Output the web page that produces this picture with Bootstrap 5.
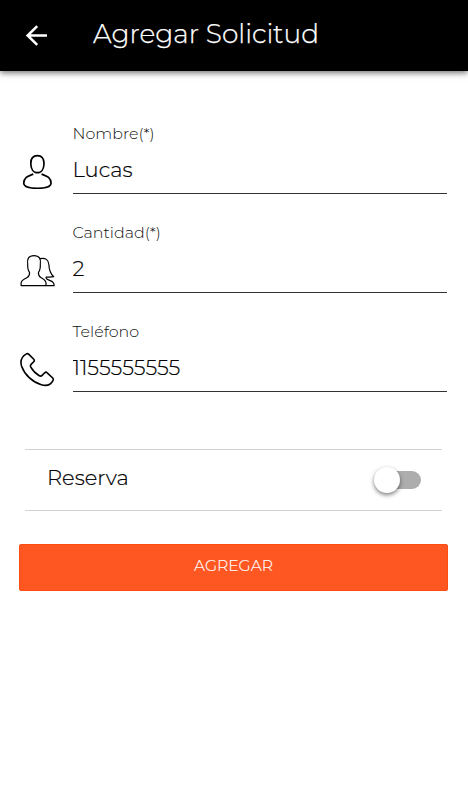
<!DOCTYPE html>
<html lang="es">
<head>
<meta charset="utf-8">
<meta name="viewport" content="width=device-width, initial-scale=1">
<title>Agregar Solicitud</title>
<link href="https://cdn.jsdelivr.net/npm/bootstrap@5.3.0/dist/css/bootstrap.min.css" rel="stylesheet">
<style>
body{font-family:Montserrat,Inter,sans-serif;font-weight:300;color:#000;background:#fff;overflow:hidden}
.app-bar{height:71px;background:#000;box-shadow:0 2px 6px rgba(0,0,0,.55);padding-left:24px}
.app-title{font-size:26.4px;line-height:32px;font-weight:300;color:#fff;margin:0 0 3px 44px;-webkit-text-stroke:.25px #fff}
.form-area{padding:50px 21px 0 20px}
.field-row{height:99px}
.field-icon{width:36px;height:36px;margin:32px 17.500px 0 -1px}
.field-label{font-size:15.900px;line-height:20px;margin-top:3px;color:#111;font-weight:300}
.form-control.field-input{height:38px;font-size:21px;line-height:26px;font-weight:300;margin-top:12px;padding:0 0 11px;border:0;border-bottom:1px solid #333;border-radius:0;color:#000;background:none;box-shadow:none;-webkit-text-stroke:.2px #000}
.reserve-row{margin:31px 5px 0 5px;height:62px;border-top:1px solid #d2d2d2;border-bottom:1px solid #d2d2d2;padding:0 21px 0 22px}
.reserve-label{font-size:21px;line-height:28px;margin-bottom:4px;-webkit-text-stroke:.2px #000}
.form-check-input.toggle{width:35px;height:18px;margin:0;border:0;border-radius:9px;background:#adadad;position:relative;box-shadow:none}
.toggle::before{content:"";position:absolute;left:-12px;top:-4px;width:26px;height:26px;border-radius:50%;background:#fff;box-shadow:0 2px 4px rgba(0,0,0,.5)}
.btn.submit-btn{height:47px;margin:33px -1px 0;width:429px;background:#ff5722;color:#fff;border:1px solid #ff4d12;border-radius:2px;font-size:15.600px;font-weight:300;padding:0 0 4px;-webkit-text-stroke:.15px #fff}
</style>
<script src="https://cdn.jsdelivr.net/npm/bootstrap@5.3.0/dist/js/bootstrap.bundle.min.js" defer></script>
</head>
<body>
<header class="app-bar d-flex align-items-center">
  <svg width="25" height="24" viewBox="0 0 25 24" fill="none" stroke="#fff" stroke-width="2.5" aria-label="Volver"><path d="M23 11.500H4M13.200 2.100 3.600 11.500l9.600 9.400"/></svg>
  <h1 class="app-title">Agregar Solicitud</h1>
</header>
<main class="form-area">
  <div class="field-row d-flex">
    <svg class="field-icon flex-shrink-0" viewBox="0 0 36 36" fill="none" stroke="#000" stroke-width="1.7" stroke-linejoin="round"><path d="M18.400 2.700C13.900 2.700 11.800 5.700 11.800 10.400c0 5.200 2.400 9.300 6.600 9.300s6.600-4.100 6.600-9.300c0-4.700-2.100-7.700-6.600-7.700ZM14.300 21.100C10.300 22.800 5 23.500 4.700 30.300c0 3.500 6 5 13.700 5s13.700-1.500 13.700-5c-.3-6.800-5.600-7.500-9.600-9.200"/></svg>
    <div class="flex-grow-1"><label class="field-label d-block" for="nombre">Nombre(*)</label><input class="form-control field-input" id="nombre" value="Lucas"></div>
  </div>
  <div class="field-row d-flex">
    <svg class="field-icon flex-shrink-0" viewBox="0 0 36 36" fill="none" stroke="#000" stroke-width="1.200" stroke-linejoin="round"><path d="M27 33.600H2.100V31.300C2.100 27.600 5.700 27 8.200 25.500 11 23.900 10.700 22 10.500 20.300 8.800 18.200 8.500 16.500 8.700 12.300 7.800 6.800 9.700 3.600 15 3.600s7.200 3.200 6.300 8.700c.2 4.200-.1 5.900-1.800 8-.2 1.700-.5 3.600 2.300 5.200 2.500 1.500 5.200 2.300 5.200 5.800v2.300M21 6.700c5.500-1.200 8.600 1 8.900 6 .1 5.800 1.200 8.500 4.800 12-2 .5-4.500.5-7.500.3-.7 1.400.5 2.200 2.300 2.900 3.400 1.300 5.500 1.900 5.700 5.700H27"/></svg>
    <div class="flex-grow-1"><label class="field-label d-block" for="cantidad">Cantidad(*)</label><input class="form-control field-input" id="cantidad" value="2"></div>
  </div>
  <div class="field-row d-flex">
    <svg class="field-icon flex-shrink-0" viewBox="0 0 36 36" fill="none" stroke="#000" stroke-width="1.600" stroke-linejoin="round"><path d="M9.600 3.100l5.200 5.200c.8.900.7 1.700-.1 2.500l-2.600 2.600c-1 1-.9 1.700-.3 2.800 2 3.600 4.900 6.500 8.500 8.500 1.100.6 1.900.6 2.800-.3l2.600-2.600c.9-.8 1.700-.8 2.500 0l5.500 5.200c.9.900.9 1.700.1 2.800-2.200 4.300-6.400 5.400-11.500 3.900C13.300 31.100 5.700 23.800 2.500 14.900 1.200 10.400 2 6.200 7 3.100c1.100-.8 1.800-.8 2.600 0Z"/></svg>
    <div class="flex-grow-1"><label class="field-label d-block" for="telefono">Teléfono</label><input class="form-control field-input" id="telefono" value="1155555555"></div>
  </div>
  <div class="reserve-row d-flex align-items-center justify-content-between">
    <label class="reserve-label" for="reserva">Reserva</label>
    <input class="form-check-input toggle" type="checkbox" id="reserva">
  </div>
  <button class="btn submit-btn d-block" type="button">AGREGAR</button>
</main>
</body>
</html>
